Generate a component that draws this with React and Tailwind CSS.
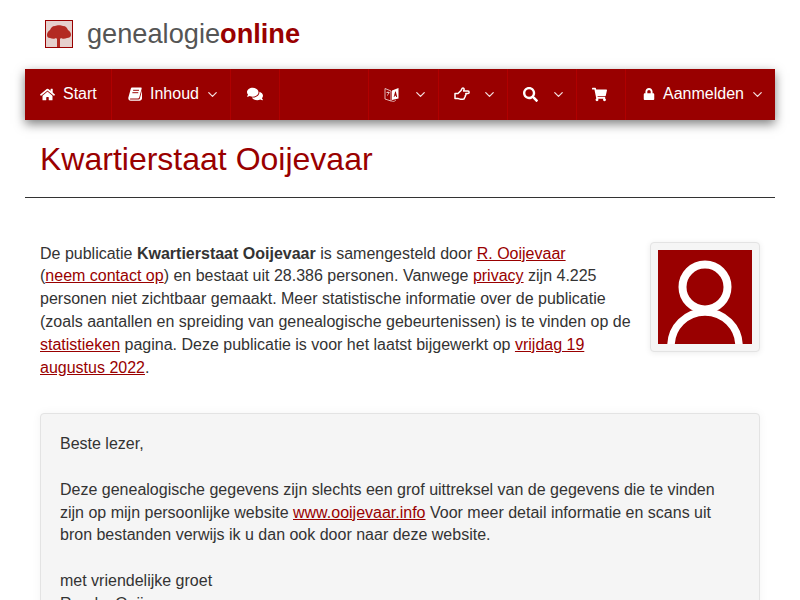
import React from 'react';
import { FaHome, FaComments, FaSearch, FaShoppingCart, FaLock } from 'react-icons/fa';
import { ChevronDown } from 'lucide-react';

const TreeLogo = () => (
  <div className="w-[28px] h-[28px] border border-[#990000] bg-[#e6d0cd] shrink-0">
    <svg viewBox="0 0 26 26" className="w-full h-full block">
      <path d="M1 14c0-2 1-4 3-5 1-2 2-4 5-4 2-1 6-1 8 0 3 0 4 2 5 4 2 1 3 3 3 5 0 2-2 3-4 3-2 1-5 1-6 0l-1 1v8h-3v-8l-1-1c-1 1-4 1-6 0-2 0-3-1-3-3z" fill="#b32a22" />
    </svg>
  </div>
);

const BookIcon = () => (
  <svg viewBox="0 0 15 14" className="w-[14px] h-[14px]" preserveAspectRatio="none">
    <path d="M4.2.6h9.600c.6 0 1 .5.8 1.100L12.200 10c-.3 1-1 1.600-2 1.600H2.600c-.7 0-.9.9-.1 1h9c.6 0 .9-.3 1.100-.8L15 3.600v8c-.3 1.300-1.200 2.200-2.600 2.200H3C1.300 13.800.2 12.600.3 11c.1-.5.2-1 .4-1.500L3 1.700C3.200 1 3.600.6 4.200.6z" fill="#fff" />
    <path d="M5.500 3.300h6.300M4.700 5.700h6.300" stroke="#990000" strokeWidth="1" />
  </svg>
);

const HandIcon = () => (
  <svg viewBox="0 0 17 14" className="w-[17px] h-[14px]" fill="none">
    <path d="M1 6.500h3l3-3c.5-.8.8-2.500 2-2.500s1.500 1.500.6 3h4.400c1.500 0 1.500 2.500 0 2.500h-2.200c.5 1 .2 1.800-.5 2.200.2 1-.2 1.600-.8 2 0 1-.6 1.500-1.500 1.500H6.500c-1 0-1.500-.8-2.500-.8H1z" stroke="#fff" strokeWidth="1.500" strokeLinejoin="round" />
  </svg>
);

const LanguageIcon = () => (
  <svg viewBox="0 0 16 16" className="w-[16px] h-[16px]" fill="none">
    <path d="M1 2.500 7 5v10L1 13z" stroke="#e9c9c9" strokeWidth="0.9" />
    <path d="M8 4.500 14.500 2v10.500L8 14z" fill="#fff" />
    <path d="M9.700 11 11.200 5.500h.6L13.200 11h-1l-.3-1.200h-1.200L10.400 11z" fill="#990000" />
    <path d="M2.500 6.500h3M4 5.500v1M3 9.500c1-.6 1.800-1.600 2-3" stroke="#fff" strokeWidth="0.7" />
    <path d="M7 15l3 .5 2-1.500" stroke="#e9c9c9" strokeWidth="0.7" />
  </svg>
);

const NavItem = ({ icon, label, caret, className = '' }) => (
  <div className={`h-full flex items-center pb-[1px] border-r border-[#b00000] text-white text-[16px] ${className}`}>
    {icon}
    {label && <span className="ml-[8px]">{label}</span>}
    {caret && <ChevronDown size={15} strokeWidth={2} className="ml-auto mt-[1px] text-[#f3dede]" />}
  </div>
);

const Link = ({ children }) => <a href="#" className="text-[#990000] underline">{children}</a>;

export default function App() {
  return (
    <div className="h-[600px] overflow-hidden bg-white text-[#333333] text-[16px] leading-[22.857px] font-['Liberation_Sans',Arial,sans-serif]">
      <div className="h-[69px] flex items-center pl-[45px] pb-[1px]">
        <TreeLogo />
        <div className="ml-[14px] text-[27.2px] leading-[30px] text-[#555555]">
          genealogie<span className="font-bold text-[#990000]">online</span>
        </div>
      </div>

      <nav className="mx-[25px] h-[51px] bg-[#990000] flex shadow-[0_4px_10px_rgba(0,0,0,0.5)]">
        <NavItem className="w-[87px] pl-[15px]" icon={<FaHome size={15} />} label="Start" />
        <NavItem className="w-[119px] pl-[16px] pr-[10px]" icon={<BookIcon />} label="Inhoud" caret />
        <NavItem className="w-[49px] pl-[16px]" icon={<FaComments size={16} />} />
        <div className="w-[89px] h-full border-r border-[#b00000]" />
        <NavItem className="w-[70px] pl-[15px] pr-[10px]" icon={<LanguageIcon />} caret />
        <NavItem className="w-[69px] pl-[15px] pr-[10px]" icon={<HandIcon />} caret />
        <NavItem className="w-[69px] pl-[15px] pr-[10px]" icon={<FaSearch size={15} />} caret />
        <NavItem className="w-[49px] pl-[15px]" icon={<FaShoppingCart size={15} />} />
        <div className="flex-1 h-full flex items-center pb-[1px] pl-[17px] pr-[10px] text-white">
          <FaLock size={12} />
          <span className="ml-[8px]">Aanmelden</span>
          <ChevronDown size={15} strokeWidth={2} className="ml-auto mt-[1px] text-[#f3dede]" />
        </div>
      </nav>

      <div className="mx-[25px] border-b border-[#333333] h-[78px] pl-[15px] pt-[21px]">
        <h1 className="text-[32px] leading-[36px] text-[#990000]">Kwartierstaat Ooijevaar</h1>
      </div>

      <div className="mx-[40px] mt-[44px] flex justify-between items-start">
        <p className="w-[600px] pt-[0.5px]">
          De publicatie <b>Kwartierstaat Ooijevaar</b> is samengesteld door <Link>R. Ooijevaar</Link> (<Link>neem&nbsp;contact&nbsp;op</Link>) en bestaat uit 28.386 personen. Vanwege <Link>privacy</Link> zijn 4.225 personen niet zichtbaar gemaakt. Meer statistische informatie over de publicatie (zoals aantallen en spreiding van genealogische gebeurtenissen) is te vinden op de <Link>statistieken</Link> pagina. Deze publicatie is voor het laatst bijgewerkt op <Link>vrijdag 19 augustus 2022</Link>.
        </p>
        <div className="w-[110px] h-[110px] p-[7px] bg-[#f5f5f5] border border-[#e3e3e3] rounded-[4px] shadow-[0_1px_6px_rgba(0,0,0,0.08)] shrink-0">
          <svg viewBox="0 0 94 94" className="w-[94px] h-[94px] block bg-[#990000]">
            <circle cx="47" cy="37" r="22.500" fill="none" stroke="#fff" strokeWidth="8" />
            <path d="M13 96A34 34 0 0 1 81 96" fill="none" stroke="#fff" strokeWidth="7.500" />
          </svg>
        </div>
      </div>

      <div className="mx-[40px] mt-[33.36px] bg-[#f5f5f5] border border-[#e3e3e3] rounded-[4px] px-[19px] pt-[19px] pb-[19px] shadow-[0_0_10px_rgba(0,0,0,0.05)]">
        <p>Beste lezer,</p>
        <p className="mt-[22.857px]">
          Deze genealogische gegevens zijn slechts een grof uittreksel van de gegevens die te vinden zijn op mijn persoonlijke website <Link>www.ooijevaar.info</Link> Voor meer detail informatie en scans uit bron bestanden verwijs ik u dan ook door naar deze website.
        </p>
        <p className="mt-[22.857px]">met vriendelijke groet</p>
        <p>Ruud v Ooijevaar</p>
      </div>
    </div>
  );
}
